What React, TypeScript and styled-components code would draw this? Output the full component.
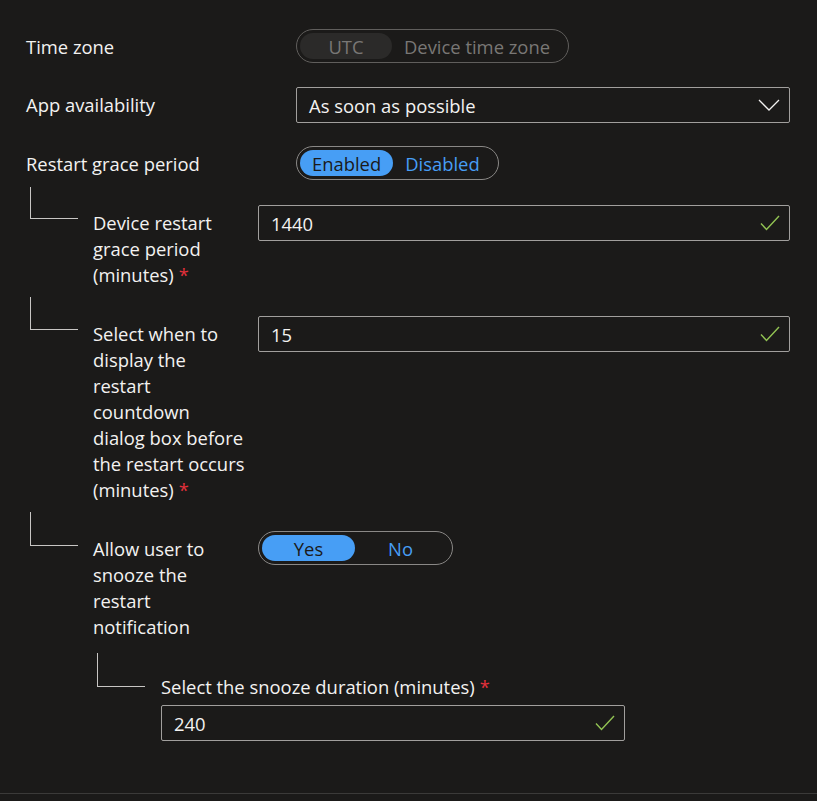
import React from 'react';
import styled, { createGlobalStyle } from 'styled-components';

const GlobalStyle = createGlobalStyle`
  html, body {
    margin: 0;
    background-color: #1b1a19;
  }
  body {
    font-family: "Open Sans", "Noto Sans", sans-serif;
    color: #f3f2f1;
  }
`;

const Page = styled.div`
  box-sizing: border-box;
  height: 794px;
  padding: 29px 27px 0 26px;
  border-bottom: 1px solid #3b3a39;
`;

const Row = styled.div<{ $gap?: number }>`
  display: grid;
  grid-template-columns: 270px 1fr;
  align-items: start;
  margin-top: ${p => p.$gap ?? 0}px;
`;

const NestedRow = styled.div<{ $gap?: number }>`
  display: grid;
  grid-template-columns: 67px 165px 1fr;
  align-items: start;
  margin-top: ${p => p.$gap ?? 0}px;
`;

const SnoozeRow = styled.div<{ $gap?: number }>`
  display: grid;
  grid-template-columns: 67px 68px 464px;
  margin-top: ${p => p.$gap ?? 0}px;
`;

const Connector = styled.div<{ $top: number; $drop: number }>`
  margin: -${p => p.$top}px 0 0 4px;
  width: 48px;
  height: ${p => p.$top + p.$drop}px;
  border-left: 1px solid #c8c6c4;
  border-bottom: 1px solid #c8c6c4;
  box-sizing: border-box;
`;

const Label = styled.div`
  font-size: 18.4px;
  line-height: 26px;
  padding-top: 5px;
  white-space: nowrap;
`;

const Required = styled.span`
  color: #e3303b;
  margin-left: 5px;
`;

const Toggle = styled.div<{ $disabled?: boolean }>`
  display: inline-flex;
  align-items: stretch;
  box-sizing: border-box;
  height: 34px;
  padding: 3px 6px 3px 3px;
  border: 1px solid ${p => (p.$disabled ? '#605e5c' : '#8a8886')};
  border-radius: 17px;
  justify-self: start;
`;

const Segment = styled.div<{ $on?: boolean; $disabled?: boolean; $min?: number }>`
  display: flex;
  align-items: center;
  justify-content: center;
  padding: 0 12px;
  min-width: ${p => p.$min ?? 0}px;
  box-sizing: border-box;
  border-radius: 14px;
  font-size: 18.4px;
  color: ${p => (p.$disabled ? '#797775' : p.$on ? '#1b1a19' : '#479ef5')};
  background: ${p => (p.$disabled ? (p.$on ? '#2b2a29' : 'transparent') : p.$on ? '#479ef5' : 'transparent')};
`;

const Field = styled.div`
  display: flex;
  align-items: center;
  justify-content: space-between;
  box-sizing: border-box;
  height: 36px;
  padding: 0 9px 0 12px;
  border: 1px solid #a19f9d;
  border-radius: 2px;
  font-size: 18.4px;
`;

const SnoozeBody = styled.div`
  display: flex;
  flex-direction: column;
  gap: 5px;
  padding-top: 21px;
`;

const SnoozeLabel = styled.div`
  font-size: 18.4px;
  line-height: 26px;
  white-space: nowrap;
`;

const Chevron = () => (
  <svg width="22" height="12" viewBox="0 0 22 12" fill="none">
    <path d="M1 1l10 10L21 1" stroke="#f3f2f1" strokeWidth="1.3" />
  </svg>
);

const Check = () => (
  <svg width="20" height="16" viewBox="0 0 20 16" fill="none">
    <path d="M1 8.5l5.5 6L19 1" stroke="#92c353" strokeWidth="1.4" />
  </svg>
);

export default function App() {
  return (
    <Page>
      <GlobalStyle />

      <Row>
        <Label>Time zone</Label>
        <Toggle $disabled>
          <Segment $disabled $on $min={92}>UTC</Segment>
          <Segment $disabled>Device time zone</Segment>
        </Toggle>
      </Row>

      <Row $gap={24}>
        <Label>App availability</Label>
        <Field>
          As soon as possible
          <Chevron />
        </Field>
      </Row>

      <Row $gap={23}>
        <Label>Restart grace period</Label>
        <Toggle>
          <Segment $on $min={91}>Enabled</Segment>
          <Segment>Disabled</Segment>
        </Toggle>
      </Row>

      <NestedRow $gap={25}>
        <Connector $top={18} $drop={14} />
        <Label>
          Device restart<br />grace period<br />(minutes)<Required>*</Required>
        </Label>
        <Field>
          1440
          <Check />
        </Field>
      </NestedRow>

      <NestedRow $gap={28}>
        <Connector $top={19} $drop={14} />
        <Label>
          Select when to<br />display the<br />restart<br />countdown<br />dialog box before<br />the restart occurs<br />(minutes)<Required>*</Required>
        </Label>
        <Field>
          15
          <Check />
        </Field>
      </NestedRow>

      <NestedRow $gap={28}>
        <Connector $top={19} $drop={15} />
        <Label>
          Allow user to<br />snooze the<br />restart<br />notification
        </Label>
        <Toggle>
          <Segment $on $min={93}>Yes</Segment>
          <Segment $min={91}>No</Segment>
        </Toggle>
      </NestedRow>

      <SnoozeRow $gap={13}>
        <span />
        <Connector $top={0} $drop={34} />
        <SnoozeBody>
          <SnoozeLabel>
            Select the snooze duration (minutes)<Required>*</Required>
          </SnoozeLabel>
          <Field>
            240
            <Check />
          </Field>
        </SnoozeBody>
      </SnoozeRow>
    </Page>
  );
}
